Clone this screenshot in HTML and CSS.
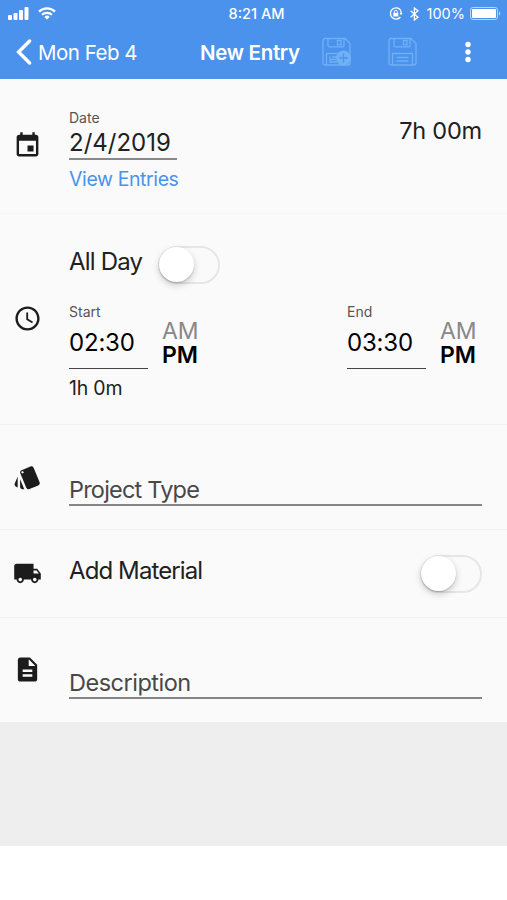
FILE: index.html
```
<!DOCTYPE html>
<html lang="en">
<head>
    <meta charset="UTF-8">
    <meta name="viewport" content="width=device-width, initial-scale=1.0">
    <title>New Entry</title>
    <link rel="stylesheet" href="styles.css">
</head>
<body>
    <header class="header">
        <div class="status-bar">
            <div class="status-left">
                <svg class="signal" width="21" height="13" viewBox="0 0 21 13" fill="#fff">
                    <rect x="0" y="8" width="4" height="5" rx="1"/>
                    <rect x="5.5" y="6" width="4" height="7" rx="1"/>
                    <rect x="11" y="3" width="4" height="10" rx="1"/>
                    <rect x="16.5" y="0" width="4" height="13" rx="1"/>
                </svg>
                <svg width="18" height="13" viewBox="0 0 18 13" fill="none" stroke="#fff" stroke-width="2.2">
                    <path d="M1 4.6a11.4 11.4 0 0 1 16 0"/>
                    <path d="M4 7.8a7.2 7.2 0 0 1 10 0"/>
                    <path d="M9 12.6 6.3 9.9a3.9 3.9 0 0 1 5.4 0z" fill="#fff" stroke="none"/>
                </svg>
            </div>
            <div class="clock">8:21 AM</div>
            <div class="status-right">
                <svg width="14" height="13" viewBox="0 0 14 13" fill="none" stroke="#fff" stroke-width="1.3">
                    <path d="M11.6 3.2A5.6 5.6 0 1 0 11.4 10"/>
                    <path d="M10.6 6h3l-1.5 2.3z" fill="#fff" stroke="none"/>
                    <path d="M12.1 6.4a5.6 5.6 0 0 0-.6-3.2"/>
                    <rect x="4.3" y="5.8" width="5" height="3.7" fill="#fff" stroke="none"/>
                    <path d="M5.3 6V4.8a1.5 1.5 0 0 1 3 0V6" stroke-width="1"/>
                </svg>
                <svg class="bluetooth" width="9" height="14" viewBox="0 0 9 14" fill="none" stroke="#fff" stroke-width="1.3">
                    <path d="M.6 3.8 8 10.2 4.4 13V1L8 3.8.6 10.2"/>
                </svg>
                <span class="percent">100%</span>
                <svg width="31" height="13" viewBox="0 0 31 13">
                    <rect x=".5" y=".5" width="27" height="12" rx="2.5" fill="none" stroke="#b9d6f9"/>
                    <rect x="2" y="2" width="24" height="9" rx="1" fill="#fff"/>
                    <path d="M29 4.5v4a2.2 2.2 0 0 0 0-4z" fill="#b9d6f9"/>
                </svg>
            </div>
        </div>
        <nav class="navbar">
            <a class="back">
                <svg width="16" height="26" viewBox="0 0 16 26" fill="none" stroke="#fff" stroke-width="3.4" stroke-linecap="round">
                    <path d="M13.6 2 2.6 13l11 11"/>
                </svg>
                <span>Mon Feb 4</span>
            </a>
            <h1>New Entry</h1>
            <div class="actions">
                <svg width="30" height="30" viewBox="0 0 30 30" fill="none" stroke="#70b0f6" stroke-width="1.3">
                    <path d="M3 1.5h20l5 5V26a2 2 0 0 1-2 2H3a2 2 0 0 1-2-2V3.5a2 2 0 0 1 2-2z"/>
                    <path d="M6 1.5V8.500a1.300 1.300 0 0 0 1.300 1.300h13.400A1.300 1.300 0 0 0 22 8.500V1.500M15.500 3.500h3.500v4.300h-3.500zM4.500 28V16.500h20M8 19.500v5.500h7M10 20h6M8 22.500h6"/>
                    <circle cx="21.500" cy="21" r="7.500" fill="#70b0f6" stroke="none"/>
                    <path d="M17 21h9M21.500 16.500v9" stroke="#4a92ec"/>
                </svg>
                <svg class="save" width="30" height="30" viewBox="0 0 30 30" fill="none" stroke="#70b0f6" stroke-width="1.3">
                    <path d="M3 1.500h20l5 5V26a2 2 0 0 1-2 2H3a2 2 0 0 1-2-2V3.500a2 2 0 0 1 2-2z"/>
                    <path d="M6 1.500V8.500a1.300 1.300 0 0 0 1.300 1.300h13.400A1.300 1.300 0 0 0 22 8.500V1.500M15.500 3.500h3.500v4.300h-3.500zM4.500 28V16.500h20V28M8.500 20.500h12M8.500 24h12"/>
                </svg>
                <svg class="more" width="6" height="22" viewBox="0 0 6 22" fill="#fff">
                    <circle cx="3" cy="3.500" r="2.700"/>
                    <circle cx="3" cy="11" r="2.700"/>
                    <circle cx="3" cy="18.500" r="2.700"/>
                </svg>
            </div>
        </nav>
    </header>

    <main>
        <section class="row date-row">
            <svg class="icon" viewBox="0 0 24 24"><path d="M17 12h-5v5h5v-5zM16 1v2H8V1H6v2H5c-1.110 0-1.990.9-1.990 2L3 19c0 1.100.890 2 2 2h14c1.100 0 2-.9 2-2V5c0-1.100-.9-2-2-2h-1V1h-2zm3 18H5V8h14v11z"/></svg>
            <div class="content">
                <div class="label">Date</div>
                <div class="date-value">2/4/2019</div>
                <a class="link">View Entries</a>
            </div>
            <div class="total">7h 00m</div>
        </section>

        <section class="row time-row">
            <svg class="icon" viewBox="0 0 24 24"><path d="M11.990 2C6.470 2 2 6.480 2 12s4.470 10 9.990 10C17.520 22 22 17.520 22 12S17.520 2 11.990 2zM12 20c-4.420 0-8-3.580-8-8s3.580-8 8-8 8 3.580 8 8-3.580 8-8 8zm.5-13H11v6l4.800 2.900.750-1.230-4.050-2.420V7z"/></svg>
            <div class="content">
                <div class="all-day">
                    <span class="title">All Day</span>
                    <div class="switch"></div>
                </div>
                <div class="times">
                    <div class="time">
                        <div class="field">
                            <div class="label">Start</div>
                            <div class="time-value">02:30</div>
                        </div>
                        <div class="ampm"><span>AM</span><b>PM</b></div>
                    </div>
                    <div class="time">
                        <div class="field">
                            <div class="label">End</div>
                            <div class="time-value">03:30</div>
                        </div>
                        <div class="ampm"><span>AM</span><b>PM</b></div>
                    </div>
                </div>
                <div class="duration">1h 0m</div>
            </div>
        </section>

        <section class="row project-row">
            <svg class="icon" viewBox="0 0 24 24"><path d="M2.530 19.650l1.340.560v-9.030l-2.430 5.860c-.410 1.020.080 2.190 1.090 2.610zm19.500-3.700L17.070 3.980c-.310-.750-1.040-1.210-1.810-1.230-.260 0-.530.040-.790.150L7.100 5.950c-.750.310-1.210 1.030-1.230 1.800-.010.270.040.540.150.800l4.960 11.970c.310.760 1.050 1.220 1.830 1.230.260 0 .520-.050.770-.150l7.360-3.050c1.020-.420 1.510-1.590 1.090-2.600zM7.880 8.750c-.550 0-1-.450-1-1s.450-1 1-1 1 .450 1 1-.450 1-1 1zm-2 11c0 1.100.9 2 2 2h1.450l-3.450-8.340v6.340z"/></svg>
            <div class="input project">Project Type</div>
        </section>

        <section class="row material-row">
            <svg class="icon" viewBox="0 0 24 24"><path d="M20 8h-3V4H3c-1.100 0-2 .9-2 2v11h2c0 1.660 1.340 3 3 3s3-1.340 3-3h6c0 1.660 1.340 3 3 3s3-1.340 3-3h2v-5l-3-4zM6 18.500c-.830 0-1.500-.670-1.500-1.500s.670-1.500 1.500-1.500 1.500.670 1.500 1.500-.670 1.500-1.500 1.500zm13.500-9l1.960 2.500H17V9.500h2.500zm-1.500 9c-.830 0-1.500-.670-1.500-1.500s.670-1.500 1.500-1.500 1.500.670 1.500 1.500-.670 1.500-1.500 1.500z"/></svg>
            <span class="title material">Add Material</span>
            <div class="switch"></div>
        </section>

        <section class="row description-row">
            <svg class="icon" viewBox="0 0 24 24"><path d="M14 2H6c-1.100 0-1.990.9-1.990 2L4 20c0 1.100.890 2 1.990 2H18c1.100 0 2-.9 2-2V8l-6-6zm2 16H8v-2h8v2zm0-4H8v-2h8v2zm-3-5V3.500L18.500 9H13z"/></svg>
            <div class="input">Description</div>
        </section>
    </main>
    <div class="filler"></div>
</body>
</html>
```

FILE: styles.css
```
* {
    box-sizing: border-box;
}
body {
    margin: 0;
    background-color: #fff;
    color: #212121;
    font-family: 'Inter', 'Liberation Sans', sans-serif;
    height: 900px;
    overflow: hidden;
}
svg {
    display: block;
    flex: none;
}
.header {
    height: 79px;
    background-color: #4a92ec;
    color: #fff;
}
.status-bar {
    display: grid;
    grid-template-columns: 1fr auto 1fr;
    align-items: center;
    height: 27px;
    padding: 0 6px 0 8px;
}
.status-left, .status-right {
    display: flex;
    align-items: center;
}
.status-left {
    gap: 9px;
}
.status-right {
    justify-content: flex-end;
}
.clock {
    font-size: 14.5px;
    font-weight: 500;
    line-height: 27px;
    padding-left: 4px;
}
.bluetooth {
    margin: 0 8px 0 7px;
}
.percent {
    font-size: 14.5px;
    margin-right: 5px;
}
.navbar {
    display: flex;
    align-items: center;
    height: 50px;
    padding-left: 16px;
}
.back {
    display: flex;
    align-items: center;
    gap: 6px;
    width: 184px;
    font-size: 20.5px;
    letter-spacing: -0.5px;
    white-space: nowrap;
}
h1 {
    width: 122px;
    margin: 0;
    font-size: 20.5px;
    font-weight: 600;
    letter-spacing: -0.3px;
    white-space: nowrap;
}
.actions {
    display: flex;
    align-items: center;
}
.save {
    margin: 0 47px 0 36px;
}
main {
    background-color: #fafafa;
}
.row {
    display: flex;
    align-items: flex-start;
    padding: 0 25px 0 13px;
    border-bottom: 1px solid #f1f1f1;
}
.icon {
    width: 29px;
    height: 29px;
    margin-right: 27px;
    fill: #1c1c1c;
}
.content {
    flex: 1;
}
.label {
    font-size: 14px;
    line-height: 16px;
    color: #555;
}
.title {
    font-size: 24px;
    line-height: 30px;
    letter-spacing: -0.9px;
}
.date-row {
    height: 135px;
    border-bottom-color: #f6f6f6;
}
.date-row .icon {
    margin-top: 52px;
}
.date-row .content {
    padding-top: 31px;
}
.date-value {
    width: 108px;
    height: 34px;
    border-bottom: 2px solid #8a8a8a;
    font-size: 24px;
    line-height: 33px;
}
.link {
    display: block;
    font-size: 19.5px;
    line-height: 38px;
    letter-spacing: -0.4px;
    color: #4a92ec;
}
.total {
    padding-top: 37px;
    font-size: 23.5px;
    line-height: 30px;
    letter-spacing: -0.2px;
}
.time-row {
    height: 211px;
}
.time-row .icon {
    margin-top: 90px;
}
.all-day {
    display: flex;
    height: 90px;
    padding-top: 32px;
}
.all-day .title {
    width: 89px;
    padding-top: 1px;
    letter-spacing: -0.8px;
}
.switch {
    width: 62px;
    height: 38px;
    border: 2px solid #e6e6e6;
    border-radius: 19px;
}
.switch::before {
    content: '';
    display: block;
    width: 35px;
    height: 35px;
    margin: -1px 0 0 -1px;
    border-radius: 50%;
    background-color: #fff;
    box-shadow: 0 3px 7px rgba(0, 0, 0, 0.2), 0 1px 1px rgba(0, 0, 0, 0.16);
}
.times {
    display: flex;
    justify-content: space-between;
    height: 65px;
}
.time {
    display: flex;
    gap: 14px;
}
.time:last-child {
    width: 135px;
}
.field {
    width: 79px;
}
.time-value {
    height: 49px;
    border-bottom: 1px solid #444;
    font-size: 24px;
    line-height: 46px;
    letter-spacing: -0.2px;
    color: #000;
}
.ampm {
    display: flex;
    flex-direction: column;
    padding-top: 15px;
    font-size: 23px;
    line-height: 24px;
}
.ampm span {
    color: #888;
}
.ampm b {
    color: #000;
    font-weight: 600;
}
.duration {
    font-size: 19.5px;
    line-height: 39px;
    letter-spacing: -0.2px;
}
.project-row {
    height: 105px;
}
.project-row .icon {
    margin-top: 38px;
}
.input {
    flex: 1;
    height: 32px;
    margin-top: 49px;
    border-bottom: 2px solid #858585;
    font-size: 23.5px;
    line-height: 31px;
    letter-spacing: -0.5px;
    color: #484848;
}
.project {
    letter-spacing: -0.8px;
}
.material-row {
    height: 88px;
}
.material-row .icon {
    margin-top: 29px;
}
.material {
    flex: 1;
    padding-top: 26px;
}
.material-row .switch {
    margin-top: 25px;
}
.description-row {
    height: 104px;
    border-bottom: none;
}
.description-row .icon {
    margin-top: 37px;
}
.filler {
    height: 124px;
    background-color: #eee;
}
```
